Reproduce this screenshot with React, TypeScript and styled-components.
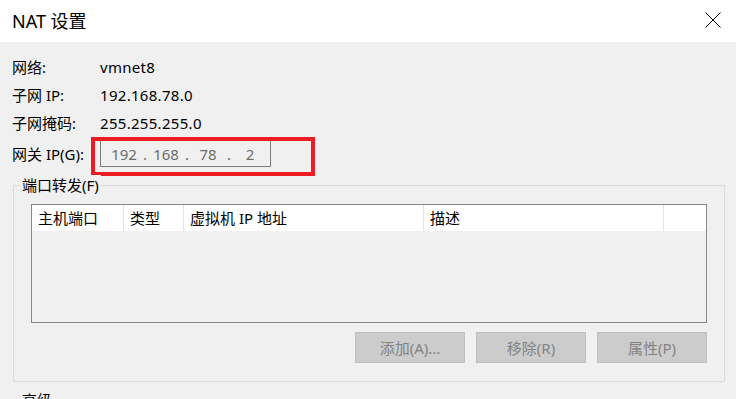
import styled, { createGlobalStyle } from "styled-components";

const infoRows = [
  { label: "网络:", value: "vmnet8" },
  { label: "子网 IP:", value: "192.168.78.0" },
  { label: "子网掩码:", value: "255.255.255.0" },
];

const gateway = ["192", "168", "78", "2"];

const columns = [
  { title: "主机端口", width: 92 },
  { title: "类型", width: 60 },
  { title: "虚拟机 IP 地址", width: 240 },
  { title: "描述", width: 240 },
  { title: "", width: 0 },
];

const buttons = ["添加(A)...", "移除(R)", "属性(P)"];

const App = () => {
  return (
    <>
      <GlobalStyle />
      <Window>
        <TitleBar>
          <Title>NAT 设置</Title>
          <CloseButton>
            <svg width="16" height="16" viewBox="0 0 16 16">
              <path d="M0.5 0.5 L15.5 15.5 M15.5 0.5 L0.5 15.5" stroke="#000" strokeWidth="1" fill="none" />
            </svg>
          </CloseButton>
        </TitleBar>
        <Body>
          <InfoList>
            {infoRows.map((row) => (
              <InfoRow key={row.label}>
                <Label>{row.label}</Label>
                <Value>{row.value}</Value>
              </InfoRow>
            ))}
            <GatewayRow>
              <Label>网关 IP(G):</Label>
              <Highlight>
                <IpInput>
                  {gateway.map((octet, i) => (
                    <Octet key={i}>
                      <OctetText>{octet}</OctetText>
                      {i < gateway.length - 1 && <Dot>.</Dot>}
                    </Octet>
                  ))}
                </IpInput>
              </Highlight>
            </GatewayRow>
          </InfoList>

          <GroupBox>
            <GroupLabel>端口转发(F)</GroupLabel>
            <Table>
              <HeaderRow>
                {columns.map((col, i) => (
                  <HeaderCell key={i} $width={col.width} $last={i === columns.length - 1}>
                    {col.title}
                  </HeaderCell>
                ))}
              </HeaderRow>
            </Table>
            <ButtonRow>
              {buttons.map((b) => (
                <Button key={b} disabled>
                  {b}
                </Button>
              ))}
            </ButtonRow>
          </GroupBox>

          <GroupBox $next>
            <GroupLabel>高级</GroupLabel>
          </GroupBox>
        </Body>
      </Window>
    </>
  );
};

export default App;

const GlobalStyle = createGlobalStyle`
  * {
    box-sizing: border-box;
  }
  body {
    margin: 0;
    background: #f0f0f0;
    font-family: "Noto Sans", "Noto Sans CJK SC", sans-serif;
    font-size: 15px;
    color: #000;
  }
`;

const Window = styled.div`
  width: 736px;
  height: 399px;
  overflow: hidden;
  background: #f0f0f0;
`;

const TitleBar = styled.div`
  height: 42px;
  background: #fff;
  display: flex;
  align-items: center;
  padding: 0 15px 0 12px;
`;

const Title = styled.h1`
  margin: 0;
  font-size: 18px;
  font-weight: 400;
  line-height: 24px;
`;

const CloseButton = styled.div`
  margin-left: auto;
  margin-top: -3px;
  width: 16px;
  height: 16px;
  display: flex;

  svg {
    display: block;
  }
`;

const Body = styled.div`
  padding-top: 11px;
`;

const InfoList = styled.div`
  display: flex;
  flex-direction: column;
  padding-left: 12px;
`;

const InfoRow = styled.div`
  height: 28px;
  display: flex;
  align-items: center;
`;

const Label = styled.span`
  width: 88px;
  flex-shrink: 0;
  line-height: 20px;
  white-space: nowrap;
`;

const Value = styled.span`
  line-height: 20px;
  letter-spacing: 0.3px;
`;

const GatewayRow = styled.div`
  margin-top: 3px;
  height: 27px;
  display: flex;
  align-items: center;
`;

const Highlight = styled.div`
  position: relative;

  &::after {
    content: "";
    position: absolute;
    left: -9px;
    top: -3px;
    right: -44px;
    bottom: -9px;
    border: 4px solid #ed1c24;
    pointer-events: none;
  }
`;

const IpInput = styled.div`
  width: 171px;
  height: 27px;
  border: 1px solid #7a7a7a;
  background: #f0f0f0;
  display: flex;
  align-items: center;
  padding-left: 6px;
  color: #6d6d6d;
`;

const Octet = styled.div`
  display: flex;
  align-items: center;
`;

const OctetText = styled.span`
  width: 34px;
  text-align: center;
  line-height: 20px;
`;

const Dot = styled.span`
  width: 8px;
  text-align: center;
  line-height: 20px;
`;

const GroupBox = styled.div<{ $next?: boolean }>`
  position: relative;
  margin: ${(props) => (props.$next ? "18px" : "18px")} 0 0 13px;
  width: 712px;
  height: ${(props) => (props.$next ? "120px" : "197px")};
  border: 1px solid #dcdcdc;
  padding: 18px 17px 18px 17px;
`;

const GroupLabel = styled.span`
  position: absolute;
  top: -11px;
  left: 6px;
  padding: 0 2px;
  background: #f0f0f0;
  line-height: 20px;
`;

const Table = styled.div`
  height: 119px;
  border: 1px solid #828790;
  background: #f0f0f0;
`;

const HeaderRow = styled.div`
  height: 26px;
  background: #fff;
  display: flex;
`;

const HeaderCell = styled.div<{ $width: number; $last: boolean }>`
  width: ${(props) => (props.$last ? "auto" : `${props.$width}px`)};
  flex: ${(props) => (props.$last ? "1" : "none")};
  border-right: ${(props) => (props.$last ? "none" : "1px solid #e5e5e5")};
  padding-left: 6px;
  display: flex;
  align-items: center;
  line-height: 20px;
  white-space: nowrap;
`;

const ButtonRow = styled.div`
  margin-top: 9px;
  display: flex;
  justify-content: flex-end;
  gap: 11px;
`;

const Button = styled.button`
  width: 110px;
  height: 31px;
  background: #cccccc;
  border: 1px solid #bfbfbf;
  color: #838383;
  font-family: "Noto Sans", "Noto Sans CJK SC", sans-serif;
  font-size: 15px;
  padding: 0;
  line-height: 20px;
`;
